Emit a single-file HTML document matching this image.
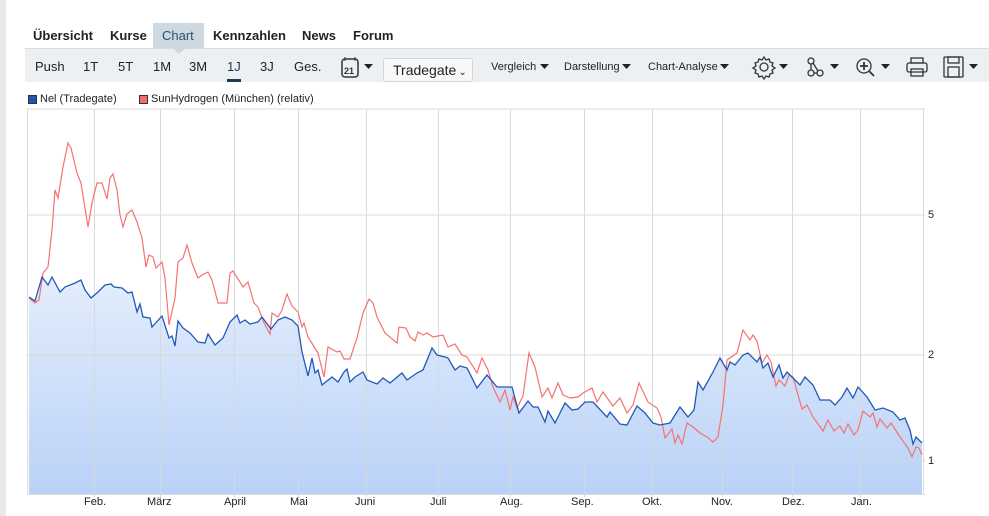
<!DOCTYPE html>
<html><head><meta charset="utf-8"><style>
*{margin:0;padding:0;box-sizing:border-box}
body{width:989px;height:516px;overflow:hidden;background:#fff;font-family:"Liberation Sans",sans-serif;position:relative}
.strip{position:absolute;left:0;top:0;width:6px;height:516px;background:#e9e9e9}
.tab{position:absolute;top:28px;font-size:13px;font-weight:bold;color:#222}
.chtab{position:absolute;left:153px;top:23px;width:51px;height:25px;background:#cdd8e0}
.tri{position:absolute;left:172px;top:48px;width:0;height:0;border-left:7px solid transparent;border-right:7px solid transparent;border-top:6px solid #cdd8e0}
.bar{position:absolute;left:25px;top:48px;width:964px;height:34px;background:#edf0f3;border-top:1px solid #d5dde4}
.t{position:absolute;top:59px;font-size:13px;color:#222}
.s{position:absolute;top:61px;font-size:11px;color:#222}
.btn{position:absolute;left:383px;top:58px;width:90px;height:24px;background:#f8f8f8;border:1px solid #d4d4d4;border-radius:3px;font-size:14px;color:#222;padding:3px 0 0 9px}
.leg{position:absolute;top:93px;font-size:11px;color:#222}
.sq{position:absolute;top:95px;width:9px;height:9px;border:1px solid #333}
.ax{position:absolute;top:496px;font-size:11px;color:#222}
.ay{position:absolute;left:928px;font-size:11px;color:#222}
</style></head><body>
<div class="strip"></div>
<div class="chtab"></div><div class="tri"></div>
<div class="tab" style="left:33px">Übersicht</div>
<div class="tab" style="left:110px">Kurse</div>
<div class="tab" style="left:162px;color:#2a4e6e;font-weight:normal">Chart</div>
<div class="tab" style="left:213px">Kennzahlen</div>
<div class="tab" style="left:302px">News</div>
<div class="tab" style="left:353px">Forum</div>
<div class="bar"></div>
<div class="tri"></div>
<div class="t" style="left:35px">Push</div>
<div class="t" style="left:83px">1T</div>
<div class="t" style="left:118px">5T</div>
<div class="t" style="left:153px">1M</div>
<div class="t" style="left:189px">3M</div>
<div class="t" style="left:227px;color:#1a3a5c">1J</div>
<div style="position:absolute;left:227px;top:79px;width:14px;height:3px;background:#1a3a5c"></div>
<div class="t" style="left:260px">3J</div>
<div class="t" style="left:294px">Ges.</div>
<div class="btn">Tradegate<span style="font-size:10px;margin-left:2px">&#8964;</span></div>
<div class="s" style="left:491px">Vergleich</div>
<div class="s" style="left:564px">Darstellung</div>
<div class="s" style="left:648px">Chart-Analyse</div>
<svg width="989" height="90" style="position:absolute;left:0;top:0" fill="none" stroke="#333">
<rect x="342" y="59" width="16" height="18" rx="3" stroke-width="1.5"/>
<line x1="345" y1="57" x2="345" y2="61"/><line x1="355" y1="57" x2="355" y2="61"/>
<text x="344" y="74" font-size="9" font-weight="bold" fill="#333" stroke="none" font-family="Liberation Sans">21</text>
<g fill="#222" stroke="none">
<path d="M364 64h9l-4.5 5z"/><path d="M540 64h9l-4.5 5z"/><path d="M622 64h9l-4.5 5z"/><path d="M720 64h9l-4.5 5z"/>
<path d="M779 64h9l-4.5 5z"/><path d="M830 64h9l-4.5 5z"/><path d="M881 64h9l-4.5 5z"/><path d="M969 64h9l-4.5 5z"/>
</g>
<g stroke-width="1.3">
<circle cx="764" cy="67" r="4"/>
<path d="M764 57l2 3 3-1 1 3 3 1-1 3 3 2-3 2 1 3-3 1-1 3-3-1-2 3-2-3-3 1-1-3-3-1 1-3-3-2 3-2-1-3 3-1 1-3 3 1z"/>
<circle cx="811" cy="61" r="3"/><circle cx="811" cy="73" r="3"/><circle cx="820" cy="73" r="3"/>
<path d="M811 64v6M813 63l5 8M814 73h3"/>
<circle cx="864" cy="66" r="7"/><path d="M869 71l5 5M860 66h8M864 62v8" stroke-width="1.8"/>
<rect x="907" y="63" width="20" height="9" rx="2"/><rect x="911" y="58" width="12" height="5"/><rect x="911" y="69" width="12" height="7"/>
<rect x="944" y="57" width="19" height="20" rx="1"/><rect x="948" y="57" width="11" height="6"/><rect x="948" y="67" width="11" height="10"/>
</g>
</svg>
<div class="sq" style="left:28px;background:#1f56b0"></div><div class="leg" style="left:40px">Nel (Tradegate)</div>
<div class="sq" style="left:139px;background:#f56c6c"></div><div class="leg" style="left:151px">SunHydrogen (München) (relativ)</div>
<svg width="989" height="516" style="position:absolute;left:0;top:0">
<defs><linearGradient id="g" x1="0" y1="0" x2="0" y2="1"><stop offset="0" stop-color="#e3edfc"/><stop offset="1" stop-color="#b9d2f7"/></linearGradient></defs>
<line x1="27" y1="109" x2="925" y2="109" stroke="#ddd"/>
<polygon fill="url(#g)" points="29,494 29,297 35,301 42,277 48,285 52,277 60,292 65,287 75,283 81,280 85,290 91,298 98,292 105,285 111,284 114,287 122,288 128,293 132,292 137,312 140,304 143,317 150,318 152,327 162,316 169,338 172,336 175,346 178,321 183,328 190,333 198,342 205,343 208,334 215,345 223,338 230,322 237,315 240,323 245,320 250,324 258,322 262,317 271,329 278,320 285,317 292,320 298,326 302,352 308,376 312,358 315,373 318,370 322,385 332,377 338,382 344,372 347,369 350,382 355,377 363,372 367,380 377,384 383,378 390,383 402,373 407,380 417,373 423,370 432,348 437,355 445,357 448,358 455,370 460,366 467,368 477,388 487,375 497,387 512,387 519,413 528,401 533,407 538,407 545,422 548,411 555,423 565,403 572,410 578,409 585,402 593,402 607,417 610,412 620,424 627,425 637,406 645,413 653,423 660,425 670,423 680,407 688,417 694,410 698,382 703,390 713,372 720,358 727,370 730,362 735,365 743,355 748,353 757,362 760,357 763,368 768,363 773,377 779,365 783,378 787,372 800,385 805,377 813,385 820,400 830,400 835,405 842,397 847,388 853,398 858,387 867,397 875,410 883,408 893,412 900,420 905,418 910,430 913,444 916,437 922,443 922,494"/>
<g stroke="#d8d8d8" stroke-width="1" opacity="0.9">
<line x1="27" y1="215" x2="925" y2="215"/><line x1="27" y1="355" x2="925" y2="355"/><line x1="27" y1="461" x2="925" y2="461"/>
<line x1="94.5" y1="109" x2="94.5" y2="497"/><line x1="160.5" y1="109" x2="160.5" y2="497"/><line x1="234.5" y1="109" x2="234.5" y2="497"/><line x1="298.5" y1="109" x2="298.5" y2="497"/><line x1="366.5" y1="109" x2="366.5" y2="497"/><line x1="438.5" y1="109" x2="438.5" y2="497"/><line x1="510.5" y1="109" x2="510.5" y2="497"/><line x1="584.5" y1="109" x2="584.5" y2="497"/><line x1="652.5" y1="109" x2="652.5" y2="497"/><line x1="722.5" y1="109" x2="722.5" y2="497"/><line x1="792.5" y1="109" x2="792.5" y2="497"/><line x1="860.5" y1="109" x2="860.5" y2="497"/>
<line x1="27.5" y1="109" x2="27.5" y2="494"/><line x1="923.5" y1="109" x2="923.5" y2="494"/><line x1="27" y1="494.5" x2="925" y2="494.5"/>
</g>
<polyline fill="none" stroke="#f57272" stroke-width="1.2" points="29,298 35,303 39,300 43,273 48,267 52,230 55,190 58,198 63,167 68,143 71,148 77,173 81,183 88,227 92,203 97,183 102,183 107,199 110,178 113,174 117,190 120,215 123,227 127,214 132,210 137,222 142,238 146,267 149,255 153,257 156,268 162,262 165,278 169,325 175,298 178,262 183,258 187,245 192,263 198,278 202,275 208,272 212,280 218,303 227,303 230,273 233,271 238,279 243,287 248,282 254,303 258,307 264,323 270,334 272,313 278,317 282,310 287,294 292,306 298,312 302,327 304,323 308,337 318,353 324,377 328,347 337,352 340,351 344,359 350,359 357,338 363,313 369,299 373,303 377,317 385,333 397,343 399,327 406,328 410,337 415,341 418,332 423,335 427,333 433,337 443,335 448,347 455,344 462,355 467,357 477,373 482,358 488,370 493,387 500,402 505,390 510,410 513,397 517,408 523,396 529,353 535,367 542,397 548,388 552,398 558,383 563,395 570,398 578,397 583,393 592,388 597,402 603,392 613,406 620,398 627,413 633,405 639,383 648,402 657,408 661,417 665,438 672,429 675,443 678,435 682,444 687,423 693,427 700,433 707,437 713,442 718,437 723,405 727,360 737,353 743,330 750,340 753,335 757,341 762,363 767,355 771,362 776,386 779,380 785,386 789,375 793,377 802,409 807,405 813,417 823,431 828,420 834,431 840,426 844,433 848,424 854,435 858,430 863,411 870,417 873,413 877,427 880,419 887,428 891,423 900,437 908,448 912,457 916,447 919,448 922,455"/>
<polyline fill="none" stroke="#2159b8" stroke-width="1.3" points="29,297 35,301 42,277 48,285 52,277 60,292 65,287 75,283 81,280 85,290 91,298 98,292 105,285 111,284 114,287 122,288 128,293 132,292 137,312 140,304 143,317 150,318 152,327 162,316 169,338 172,336 175,346 178,321 183,328 190,333 198,342 205,343 208,334 215,345 223,338 230,322 237,315 240,323 245,320 250,324 258,322 262,317 271,329 278,320 285,317 292,320 298,326 302,352 308,376 312,358 315,373 318,370 322,385 332,377 338,382 344,372 347,369 350,382 355,377 363,372 367,380 377,384 383,378 390,383 402,373 407,380 417,373 423,370 432,348 437,355 445,357 448,358 455,370 460,366 467,368 477,388 487,375 497,387 512,387 519,413 528,401 533,407 538,407 545,422 548,411 555,423 565,403 572,410 578,409 585,402 593,402 607,417 610,412 620,424 627,425 637,406 645,413 653,423 660,425 670,423 680,407 688,417 694,410 698,382 703,390 713,372 720,358 727,370 730,362 735,365 743,355 748,353 757,362 760,357 763,368 768,363 773,377 779,365 783,378 787,372 800,385 805,377 813,385 820,400 830,400 835,405 842,397 847,388 853,398 858,387 867,397 875,410 883,408 893,412 900,420 905,418 910,430 913,444 916,437 922,443"/>
</svg>
<div class="ay" style="top:209px">5</div>
<div class="ay" style="top:349px">2</div>
<div class="ay" style="top:455px">1</div>
<div class="ax" style="left:84px">Feb.</div>
<div class="ax" style="left:147px">März</div>
<div class="ax" style="left:224px">April</div>
<div class="ax" style="left:290px">Mai</div>
<div class="ax" style="left:355px">Juni</div>
<div class="ax" style="left:430px">Juli</div>
<div class="ax" style="left:500px">Aug.</div>
<div class="ax" style="left:571px">Sep.</div>
<div class="ax" style="left:642px">Okt.</div>
<div class="ax" style="left:711px">Nov.</div>
<div class="ax" style="left:782px">Dez.</div>
<div class="ax" style="left:851px">Jan.</div>
</body></html>
